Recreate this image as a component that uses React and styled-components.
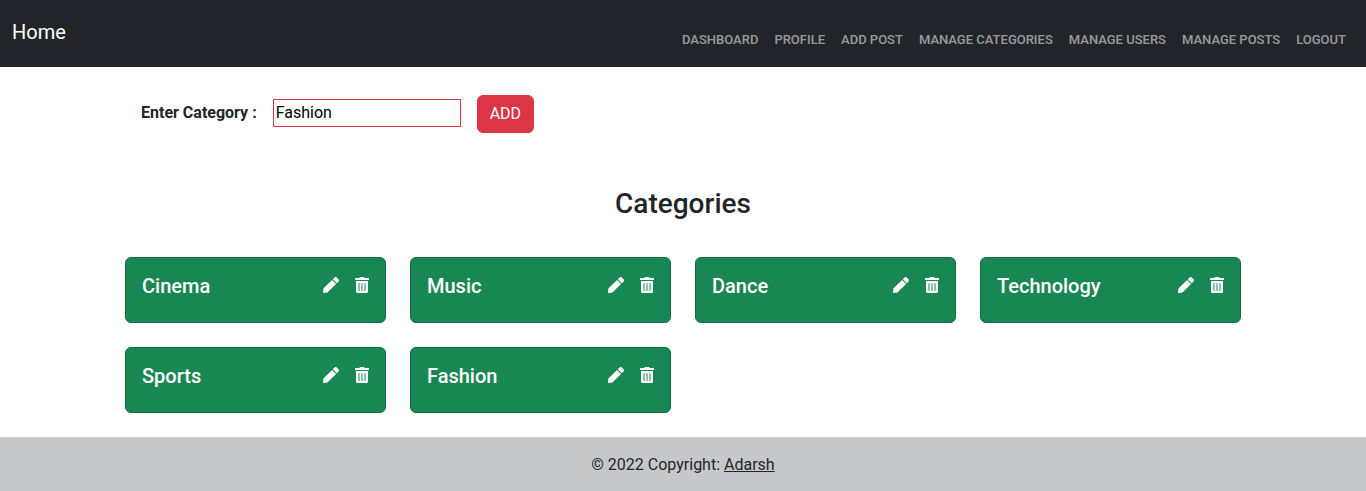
import React, { useState } from "react";
import styled, { createGlobalStyle } from "styled-components";
import { FaPen, FaTrashAlt } from "react-icons/fa";

const GlobalStyle = createGlobalStyle`
  *, *::before, *::after { box-sizing: border-box; }
  body {
    margin: 0;
    background: #fff;
    color: #212529;
    font-family: Roboto, sans-serif;
    font-size: 16px;
    line-height: 1.5;
  }
`;

const Navbar = styled.nav`
  display: flex;
  justify-content: space-between;
  height: 67px;
  padding: 8px 12px;
  background: #212529;
`;

const Brand = styled.a`
  padding: 9px 0;
  color: #fff;
  font-size: 20px;
`;

const NavLinks = styled.ul`
  display: flex;
  margin: 0;
  padding: 12px 0 0;
  list-style: none;
`;

const NavLink = styled.a`
  display: block;
  padding: 10px 8px;
  color: rgba(255, 255, 255, 0.55);
  font-size: 13px;
  font-weight: 500;
  text-transform: uppercase;
`;

const Main = styled.main`
  width: 1140px;
  margin: 0 auto;
  padding: 28px 12px 24px;
`;

const CategoryForm = styled.form`
  display: flex;
  align-items: center;
  gap: 16px;
  height: 38px;
  padding-left: 16px;
`;

const Label = styled.label`
  padding-bottom: 2px;
  font-weight: 700;
`;

const TextInput = styled.input`
  width: 188px;
  height: 28px;
  margin-bottom: 2px;
  padding: 0 2px 2px;
  border: 1px solid #dc3545;
  background: #fff;
  color: #000;
  font: inherit;
  outline: none;
`;

const AddButton = styled.button`
  height: 38px;
  padding: 6px 12px;
  border: 1px solid #dc3545;
  border-radius: 6px;
  background: #dc3545;
  color: #fff;
  font: inherit;
`;

const Heading = styled.h1`
  margin: 54px 0 36px;
  font-size: 28px;
  font-weight: 500;
  line-height: 34px;
  text-align: center;
`;

const Grid = styled.section`
  display: grid;
  grid-template-columns: repeat(4, 261px);
  gap: 24px;
`;

const Card = styled.article`
  display: flex;
  justify-content: space-between;
  height: 66px;
  padding: 16px;
  border: 1px solid #146c43;
  border-radius: 6px;
  background: #198754;
  color: #fff;
`;

const CardTitle = styled.h2`
  margin: 0;
  font-size: 20px;
  font-weight: 500;
  line-height: 24px;
`;

const Actions = styled.div`
  display: flex;
  gap: 16px;
  padding-top: 3px;
`;

const EditIcon = styled(FaPen)`
  width: 16px;
  height: 16px;
`;

const DeleteIcon = styled(FaTrashAlt)`
  width: 14px;
  height: 16px;
`;

const Footer = styled.footer`
  height: 54px;
  padding-top: 16px;
  background: #c7c8c9;
  text-align: center;
`;

const FooterLink = styled.a`
  color: #212529;
  text-decoration: underline;
`;

const links = ["Dashboard", "Profile", "Add Post", "Manage Categories", "Manage Users", "Manage Posts", "Logout"];
const categories = ["Cinema", "Music", "Dance", "Technology", "Sports", "Fashion"];

export default function App() {
  const [value, setValue] = useState("Fashion");
  return (
    <>
      <GlobalStyle />
      <Navbar>
        <Brand>Home</Brand>
        <NavLinks>
          {links.map((l) => (
            <li key={l}><NavLink>{l}</NavLink></li>
          ))}
        </NavLinks>
      </Navbar>
      <Main>
        <CategoryForm>
          <Label htmlFor="category">Enter Category :</Label>
          <TextInput id="category" value={value} onChange={(e) => setValue(e.target.value)} />
          <AddButton type="button">ADD</AddButton>
        </CategoryForm>
        <Heading>Categories</Heading>
        <Grid>
          {categories.map((c) => (
            <Card key={c}>
              <CardTitle>{c}</CardTitle>
              <Actions>
                <EditIcon />
                <DeleteIcon />
              </Actions>
            </Card>
          ))}
        </Grid>
      </Main>
      <Footer>
        © 2022 Copyright: <FooterLink>Adarsh</FooterLink>
      </Footer>
    </>
  );
}
